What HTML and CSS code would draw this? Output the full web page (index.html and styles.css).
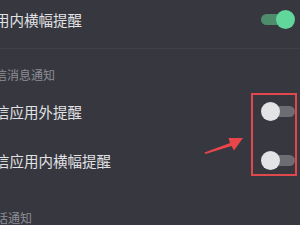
FILE: index.html
```html
<!DOCTYPE html>
<html lang="zh-CN">
<head>
<meta charset="utf-8">
<link rel="stylesheet" href="styles.css">
</head>
<body>
<div class="screen">
  <div class="row row-top">
    <span class="label">用内横幅提醒</span>
    <span class="toggle on"><span class="track"></span><span class="knob"></span></span>
  </div>
  <div class="divider"></div>
  <div class="section">信消息通知</div>
  <div class="row">
    <span class="label">信应用外提醒</span>
    <span class="toggle off"><span class="track"></span><span class="knob"></span></span>
  </div>
  <div class="row">
    <span class="label">信应用内横幅提醒</span>
    <span class="toggle off"><span class="track"></span><span class="knob"></span></span>
  </div>
  <div class="section section-bottom">话通知</div>

  <div class="highlight"></div>
  <svg class="arrow" width="50" height="26" viewBox="0 0 50 26">
    <polygon points="4.5,20.5 30,11 28.5,6 43,6 34,18.5 31.5,14 5.5,22" fill="#e8464b"/>
  </svg>
</div>
</body>
</html>
```
FILE: styles.css
```css
html, body {
  margin: 0;
  padding: 0;
}
body {
  background: #36373f;
  width: 300px;
  height: 225px;
  overflow: hidden;
  font-family: "Noto Sans CJK SC", "Noto Sans", sans-serif;
}
.screen {
  position: relative;
  width: 300px;
  height: 225px;
  overflow: hidden;
  display: flex;
  flex-direction: column;
}
.row {
  height: 49px;
  flex: none;
  display: flex;
  align-items: center;
  justify-content: space-between;
  padding-right: 5px;
}
.row-top {
  height: 39px;
  margin-bottom: 9px;
}
.label {
  font-size: 14.5px;
  line-height: 18px;
  color: #e2e2e5;
  margin-left: -5px;
  white-space: nowrap;
}
.divider {
  height: 1px;
  background: #3f4148;
  flex: none;
}
.section {
  flex: none;
  height: 38px;
  box-sizing: border-box;
  padding-top: 18px;
  font-size: 12px;
  line-height: 15px;
  color: #8d8e95;
  margin-left: -5px;
}
.section-bottom {
  padding-top: 25px;
  margin-left: -4px;
}
.toggle {
  position: relative;
  width: 34px;
  height: 19px;
  flex: none;
}
.toggle .track {
  position: absolute;
  left: 0;
  right: 0;
  top: 4px;
  height: 11px;
  border-radius: 6px;
}
.toggle .knob {
  position: absolute;
  top: 0;
  width: 19px;
  height: 19px;
  border-radius: 50%;
}
.toggle.on .track {
  background: #4d8d6c;
  right: 4px;
}
.toggle.on .knob {
  right: 0;
  background: #61d79b;
}
.toggle.off .track {
  background: #6c6d73;
  left: 4px;
}
.toggle.off .knob {
  left: 0;
  background: #e3e3e5;
}
.highlight {
  position: absolute;
  left: 251px;
  top: 93px;
  width: 42px;
  height: 79px;
  border: 2px solid #e0484c;
}
.arrow {
  position: absolute;
  left: 200px;
  top: 132px;
}
```
